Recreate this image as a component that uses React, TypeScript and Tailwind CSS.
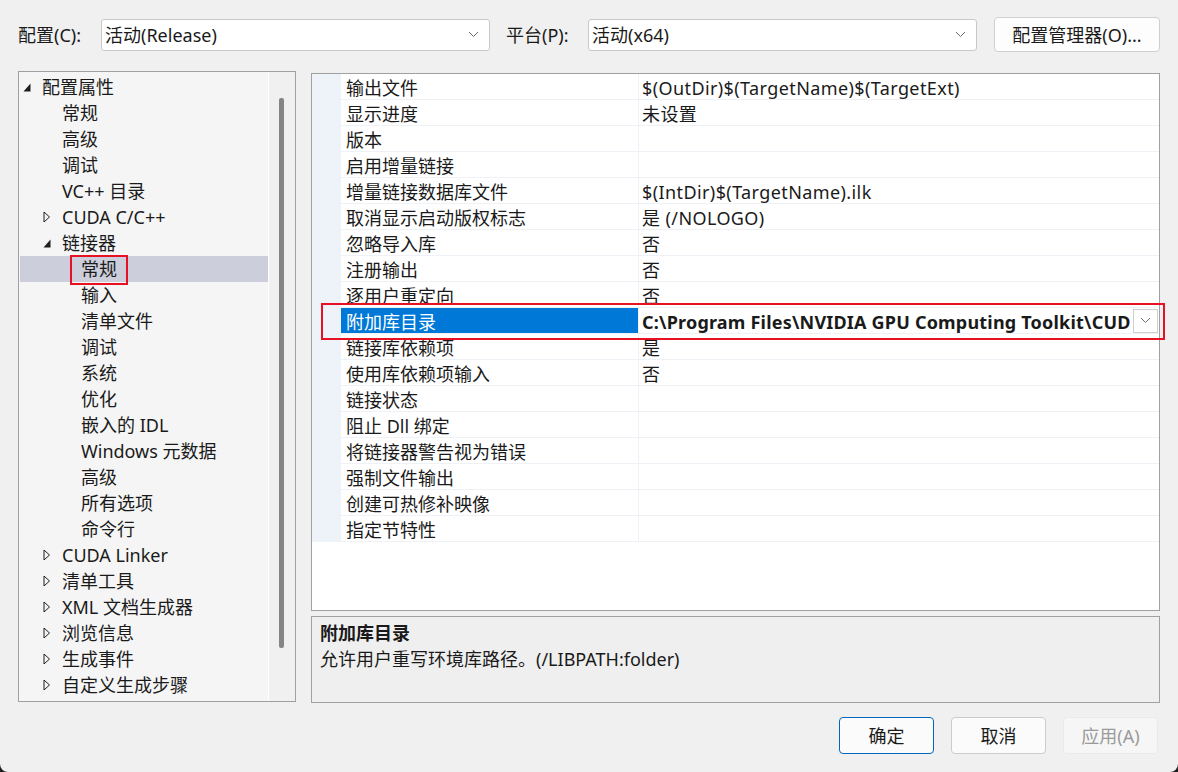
import React from "react";

type TreeItem = { label: string; level: 0 | 1 | 2; arrow?: "open" | "closed"; selected?: boolean };

const tree: TreeItem[] = [
  { label: "配置属性", level: 0, arrow: "open" },
  { label: "常规", level: 1 },
  { label: "高级", level: 1 },
  { label: "调试", level: 1 },
  { label: "VC++ 目录", level: 1 },
  { label: "CUDA C/C++", level: 1, arrow: "closed" },
  { label: "链接器", level: 1, arrow: "open" },
  { label: "常规", level: 2, selected: true },
  { label: "输入", level: 2 },
  { label: "清单文件", level: 2 },
  { label: "调试", level: 2 },
  { label: "系统", level: 2 },
  { label: "优化", level: 2 },
  { label: "嵌入的 IDL", level: 2 },
  { label: "Windows 元数据", level: 2 },
  { label: "高级", level: 2 },
  { label: "所有选项", level: 2 },
  { label: "命令行", level: 2 },
  { label: "CUDA Linker", level: 1, arrow: "closed" },
  { label: "清单工具", level: 1, arrow: "closed" },
  { label: "XML 文档生成器", level: 1, arrow: "closed" },
  { label: "浏览信息", level: 1, arrow: "closed" },
  { label: "生成事件", level: 1, arrow: "closed" },
  { label: "自定义生成步骤", level: 1, arrow: "closed" },
];

const props: [string, string][] = [
  ["输出文件", "$(OutDir)$(TargetName)$(TargetExt)"],
  ["显示进度", "未设置"],
  ["版本", ""],
  ["启用增量链接", ""],
  ["增量链接数据库文件", "$(IntDir)$(TargetName).ilk"],
  ["取消显示启动版权标志", "是 (/NOLOGO)"],
  ["忽略导入库", "否"],
  ["注册输出", "否"],
  ["逐用户重定向", "否"],
  ["附加库目录", "C:\\Program Files\\NVIDIA GPU Computing Toolkit\\CUD"],
  ["链接库依赖项", "是"],
  ["使用库依赖项输入", "否"],
  ["链接状态", ""],
  ["阻止 Dll 绑定", ""],
  ["将链接器警告视为错误", ""],
  ["强制文件输出", ""],
  ["创建可热修补映像", ""],
  ["指定节特性", ""],
];

const indent = { 0: "pl-[4px]", 1: "pl-[24px]", 2: "pl-[43px]" };

const Chevron = ({ className = "" }: { className?: string }) => (
  <svg width="11" height="7" viewBox="0 0 11 7" className={className}>
    <path d="M1 1l4.5 4.5L10 1" fill="none" stroke="#6b6b6b" strokeWidth="1" />
  </svg>
);

const Arrow = ({ kind }: { kind?: "open" | "closed" }) => {
  if (kind === "open")
    return (
      <svg width="8" height="9" viewBox="0 0 8 9">
        <path d="M7.5 0.5V8.5H0.5Z" fill="#1e1e1e" />
      </svg>
    );
  if (kind === "closed")
    return (
      <svg width="8" height="12" viewBox="0 0 8 12">
        <path d="M1 1L6.5 6L1 11Z" fill="none" stroke="#1e1e1e" strokeWidth="1" />
      </svg>
    );
  return null;
};

const Select = ({ value }: { value: string }) => (
  <div className="flex items-center justify-between w-[389px] h-[32px] bg-white border border-[#c9c9c9] rounded-[3px] pl-[3px] pr-[10px]">
    <span>{value}</span>
    <Chevron />
  </div>
);

export default function App() {
  return (
    <div className="w-[1178px] h-[772px] bg-[#1f1f1f] overflow-hidden">
      <div className="w-full h-full bg-[#f0f0f0] rounded-b-[8px] text-[18px] text-[#1a1a1a] leading-[26px] [font-family:'Noto_Sans','Noto_Sans_CJK_SC',sans-serif] flex flex-col">
        {/* 顶部：配置 / 平台 */}
        <div className="flex items-center h-[35px] mt-[17px] pl-[18px]">
          <span className="w-[83px]">配置(C):</span>
          <Select value="活动(Release)" />
          <span className="w-[82px] ml-[16px]">平台(P):</span>
          <Select value="活动(x64)" />
          <button className="ml-[17px] w-[166px] h-[35px] bg-[#fdfdfd] border border-[#d0d0d0] rounded-[4px] text-center">
            配置管理器(O)...
          </button>
        </div>

        <div className="flex mt-[19px] pl-[18px]">
          {/* 左侧树 */}
          <div className="relative flex w-[278px] h-[631px] border border-[#a0a0a4] bg-[#f5f5f5]">
            <div className="flex-1 pt-[2px] border-r border-white">
              {tree.map((t, i) => (
                <div
                  key={i}
                  className={`flex items-center h-[26px] ${indent[t.level]} ${t.selected ? "bg-[#cccedb] ml-[1px]" : ""}`}
                >
                  <span className="w-[19px] flex items-center">
                    <Arrow kind={t.arrow} />
                  </span>
                  <span className={t.selected ? "-ml-[1px]" : ""}>{t.label}</span>
                </div>
              ))}
            </div>
            <div className="w-[26px] bg-[#f0f0f0] flex justify-center pt-[26px]">
              <div className="w-[5px] h-[550px] bg-[#858585] rounded-[2px] -ml-[2px]" />
            </div>
            <div className="absolute left-[51px] top-[183px] w-[58px] h-[30px] border-2 border-[#e81123]" />
          </div>

          {/* 右侧属性表 */}
          <div className="flex flex-col ml-[15px] w-[849px]">
            <div className="relative h-[538px] mt-[2px] border border-[#a0a0a0] bg-white">
              <div className="flex">
                <div className="w-[29px] shrink-0 h-[468px] bg-[#eef3fa]" />
                <div className="flex-1 min-w-0">
                  {props.map(([name, value], i) => {
                    const sel = name === "附加库目录";
                    return (
                      <div key={i} className="flex h-[26px] border-b border-[#eef1f6]">
                        <div
                          className={`w-[298px] shrink-0 pl-[5px] pt-[2px] border-r border-[#eef1f6] h-[25px] leading-[24px] ${sel ? "bg-[#0078d7] text-white" : ""}`}
                        >
                          {name}
                        </div>
                        <div className="flex-1 min-w-0 flex items-center pl-[3px] pr-[1px] h-[25px] overflow-hidden">
                          <span
                            className={`flex-1 min-w-0 pt-[2px] whitespace-nowrap overflow-hidden ${sel ? "font-bold tracking-[0.2px]" : "tracking-[0.4px]"}`}
                          >
                            {value}
                          </span>
                          {sel && (
                            <span className="w-[25px] shrink-0 h-[24px] border border-[#cfcfcf] bg-white flex items-center justify-center">
                              <Chevron />
                            </span>
                          )}
                        </div>
                      </div>
                    );
                  })}
                </div>
              </div>
              <div className="absolute left-[9px] top-[229px] w-[844px] h-[37px] border-2 border-[#e81123]" />
            </div>

            {/* 描述 */}
            <div className="mt-[5px] h-[87px] border border-[#a0a0a0] bg-[#efefef] px-[8px] pt-[3px]">
              <div className="font-bold">附加库目录</div>
              <div>允许用户重写环境库路径。(/LIBPATH:folder)</div>
            </div>
          </div>
        </div>

        {/* 底部按钮 */}
        <div className="flex justify-end gap-[17px] mt-[14px] pr-[20px]">
          <button className="w-[95px] h-[37px] bg-[#fbfbfb] border border-[#0067c0] rounded-[4px]">确定</button>
          <button className="w-[95px] h-[37px] bg-[#fbfbfb] border border-[#cccccc] rounded-[4px]">取消</button>
          <button className="w-[95px] h-[37px] bg-[#f6f6f6] border border-[#eaeaea] rounded-[4px] text-[#9a9a9a]">
            应用(A)
          </button>
        </div>
      </div>
    </div>
  );
}
